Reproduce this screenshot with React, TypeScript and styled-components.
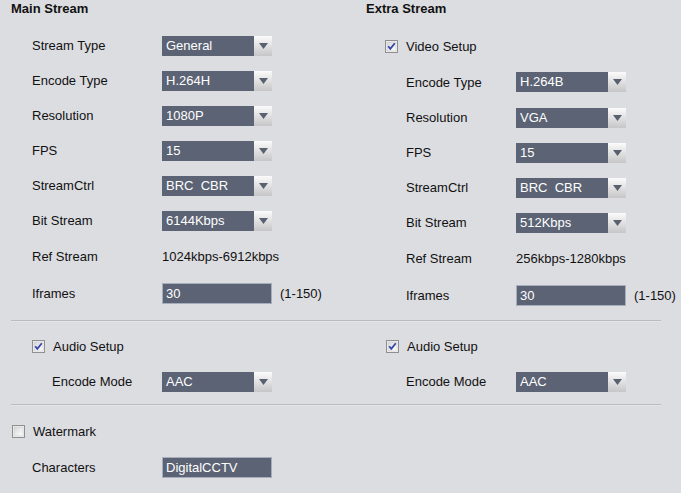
import styled, { createGlobalStyle } from "styled-components";

const GlobalStyle = createGlobalStyle`
  html, body {
    margin: 0;
    padding: 0;
    background: #dcdde1;
  }
  body {
    font-family: "Liberation Sans", Arial, sans-serif;
    font-size: 13px;
    color: #111;
  }
`;

type SelectField = { kind: "select"; value: string };
type InputField = { kind: "input"; value: string; hint?: string };
type TextField = { kind: "text"; value: string };
type Field = SelectField | InputField | TextField;

type RowDef = { label: string; field: Field; h?: number };

const mainRows: RowDef[] = [
  { label: "Stream Type", field: { kind: "select", value: "General" } },
  { label: "Encode Type", field: { kind: "select", value: "H.264H" } },
  { label: "Resolution", field: { kind: "select", value: "1080P" } },
  { label: "FPS", field: { kind: "select", value: "15" } },
  { label: "StreamCtrl", field: { kind: "select", value: "BRC\u00a0\u00a0CBR" } },
  { label: "Bit Stream", field: { kind: "select", value: "6144Kbps" } },
  { label: "Ref Stream", field: { kind: "text", value: "1024kbps-6912kbps" }, h: 37 },
  { label: "Iframes", field: { kind: "input", value: "30", hint: "(1-150)" }, h: 37 },
];

const extraRows: RowDef[] = [
  { label: "Encode Type", field: { kind: "select", value: "H.264B" }, h: 36 },
  { label: "Resolution", field: { kind: "select", value: "VGA" } },
  { label: "FPS", field: { kind: "select", value: "15" } },
  { label: "StreamCtrl", field: { kind: "select", value: "BRC\u00a0\u00a0CBR" } },
  { label: "Bit Stream", field: { kind: "select", value: "512Kbps" } },
  { label: "Ref Stream", field: { kind: "text", value: "256kbps-1280kbps" }, h: 36 },
  { label: "Iframes", field: { kind: "input", value: "30", hint: "(1-150)" }, h: 38 },
];

const Checkbox = ({ checked }: { checked: boolean }) => (
  <svg width="13" height="13" viewBox="0 0 13 13">
    <defs>
      <linearGradient id={checked ? "cbOn" : "cbOff"} x1="0" y1="0" x2="1" y2="1">
        <stop offset="0" stopColor="#d6d6d8" />
        <stop offset="1" stopColor="#ffffff" />
      </linearGradient>
    </defs>
    <rect x="0.5" y="0.5" width="12" height="12" fill="#f4f4f4" stroke="#8f8f91" />
    <rect x="2" y="2" width="9" height="9" fill={`url(#${checked ? "cbOn" : "cbOff"})`} stroke="#c9c9cb" strokeWidth="0.6" />
    {checked && (
      <path d="M3.2 6.2 L5.3 8.8 L9.8 3.2" fill="none" stroke="#3346a8" strokeWidth="1.8" />
    )}
  </svg>
);

const Arrow = () => (
  <svg width="9" height="6" viewBox="0 0 9 6">
    <path d="M0 0 H9 L4.5 6 Z" fill="#59606f" />
  </svg>
);

const renderField = (field: Field) => {
  if (field.kind === "select") {
    return (
      <Select>
        <SelectValue>{field.value}</SelectValue>
        <ArrowBox>
          <Arrow />
        </ArrowBox>
      </Select>
    );
  }
  if (field.kind === "input") {
    return (
      <>
        <Input>{field.value}</Input>
        {field.hint && <Hint>{field.hint}</Hint>}
      </>
    );
  }
  return <PlainValue>{field.value}</PlainValue>;
};

const App = () => {
  return (
    <>
      <GlobalStyle />
      <Page>
        <Columns>
          <Column $pad={11}>
            <Title>Main Stream</Title>
            <Rows $indent={21}>
              {mainRows.map((r) => (
                <Row key={r.label} $h={r.h ?? 35}>
                  <Label $w={130}>{r.label}</Label>
                  {renderField(r.field)}
                </Row>
              ))}
            </Rows>
          </Column>
          <Column $pad={12}>
            <Title>Extra Stream</Title>
            <Rows $indent={19}>
              <Row $h={36}>
                <Checkbox checked />
                <CheckLabel>Video Setup</CheckLabel>
              </Row>
              <Rows $indent={21} $flush>
                {extraRows.map((r) => (
                  <Row key={r.label} $h={r.h ?? 35}>
                    <Label $w={110}>{r.label}</Label>
                    {renderField(r.field)}
                  </Row>
                ))}
              </Rows>
            </Rows>
          </Column>
        </Columns>

        <Divider $top={6} />

        <Columns>
          <Column $pad={32}>
            <Row $h={35}>
              <Checkbox checked />
              <CheckLabel>Audio Setup</CheckLabel>
            </Row>
            <Row $h={35} $indent={20}>
              <Label $w={110}>Encode Mode</Label>
              {renderField({ kind: "select", value: "AAC" })}
            </Row>
          </Column>
          <Column $pad={32}>
            <Row $h={35}>
              <Checkbox checked />
              <CheckLabel>Audio Setup</CheckLabel>
            </Row>
            <Row $h={35} $indent={20}>
              <Label $w={110}>Encode Mode</Label>
              {renderField({ kind: "select", value: "AAC" })}
            </Row>
          </Column>
        </Columns>

        <Divider $top={5} />

        <Section>
          <Row $h={35}>
            <Checkbox checked={false} />
            <CheckLabel>Watermark</CheckLabel>
          </Row>
          <Row $h={37} $indent={20}>
            <Label $w={130}>Characters</Label>
            <Input>DigitalCCTV</Input>
          </Row>
        </Section>
      </Page>
    </>
  );
};

export default App;

const Page = styled.div`
  width: 681px;
  height: 493px;
  overflow: hidden;
  background: #dcdde1;
`;

const Columns = styled.div`
  display: grid;
  grid-template-columns: 354px 1fr;
  padding-top: 7px;
`;

const Column = styled.div<{ $pad: number }>`
  display: flex;
  flex-direction: column;
  padding-left: ${(p) => p.$pad}px;
`;

const Section = styled.div`
  display: flex;
  flex-direction: column;
  padding: 8px 0 0 12px;
`;

const Title = styled.div`
  font-weight: bold;
  height: 18px;
  line-height: 18px;
  margin-top: -7px;
`;

const Rows = styled.div<{ $indent: number; $flush?: boolean }>`
  display: flex;
  flex-direction: column;
  padding-left: ${(p) => p.$indent}px;
  padding-top: ${(p) => (p.$flush ? 0 : 10)}px;
`;

const Row = styled.div<{ $h: number; $indent?: number }>`
  display: flex;
  align-items: center;
  height: ${(p) => p.$h}px;
  padding-left: ${(p) => p.$indent ?? 0}px;
  white-space: nowrap;
`;

const Label = styled.div<{ $w: number }>`
  width: ${(p) => p.$w}px;
  flex: none;
`;

const CheckLabel = styled.span`
  margin-left: 8px;
`;

const Select = styled.div`
  display: flex;
  width: 110px;
  height: 20px;
  background: #5b6374;
  color: #fff;
`;

const SelectValue = styled.div`
  flex: 1;
  padding-left: 4px;
  line-height: 20px;
`;

const ArrowBox = styled.div`
  width: 18px;
  display: flex;
  align-items: center;
  justify-content: center;
  background: linear-gradient(#fbfbfb, #c6c6c8);
`;

const Input = styled.div`
  box-sizing: border-box;
  width: 110px;
  height: 21px;
  line-height: 19px;
  padding-left: 3px;
  background: #5b6374;
  border: 1px solid #a6adbd;
  color: #fff;
`;

const Hint = styled.span`
  margin-left: 8px;
`;

const PlainValue = styled.span``;

const Divider = styled.div<{ $top: number }>`
  margin: ${(p) => p.$top}px 20px 0 11px;
  height: 1px;
  background: #b9babe;
  border-bottom: 1px solid #e4e5e8;
`;
